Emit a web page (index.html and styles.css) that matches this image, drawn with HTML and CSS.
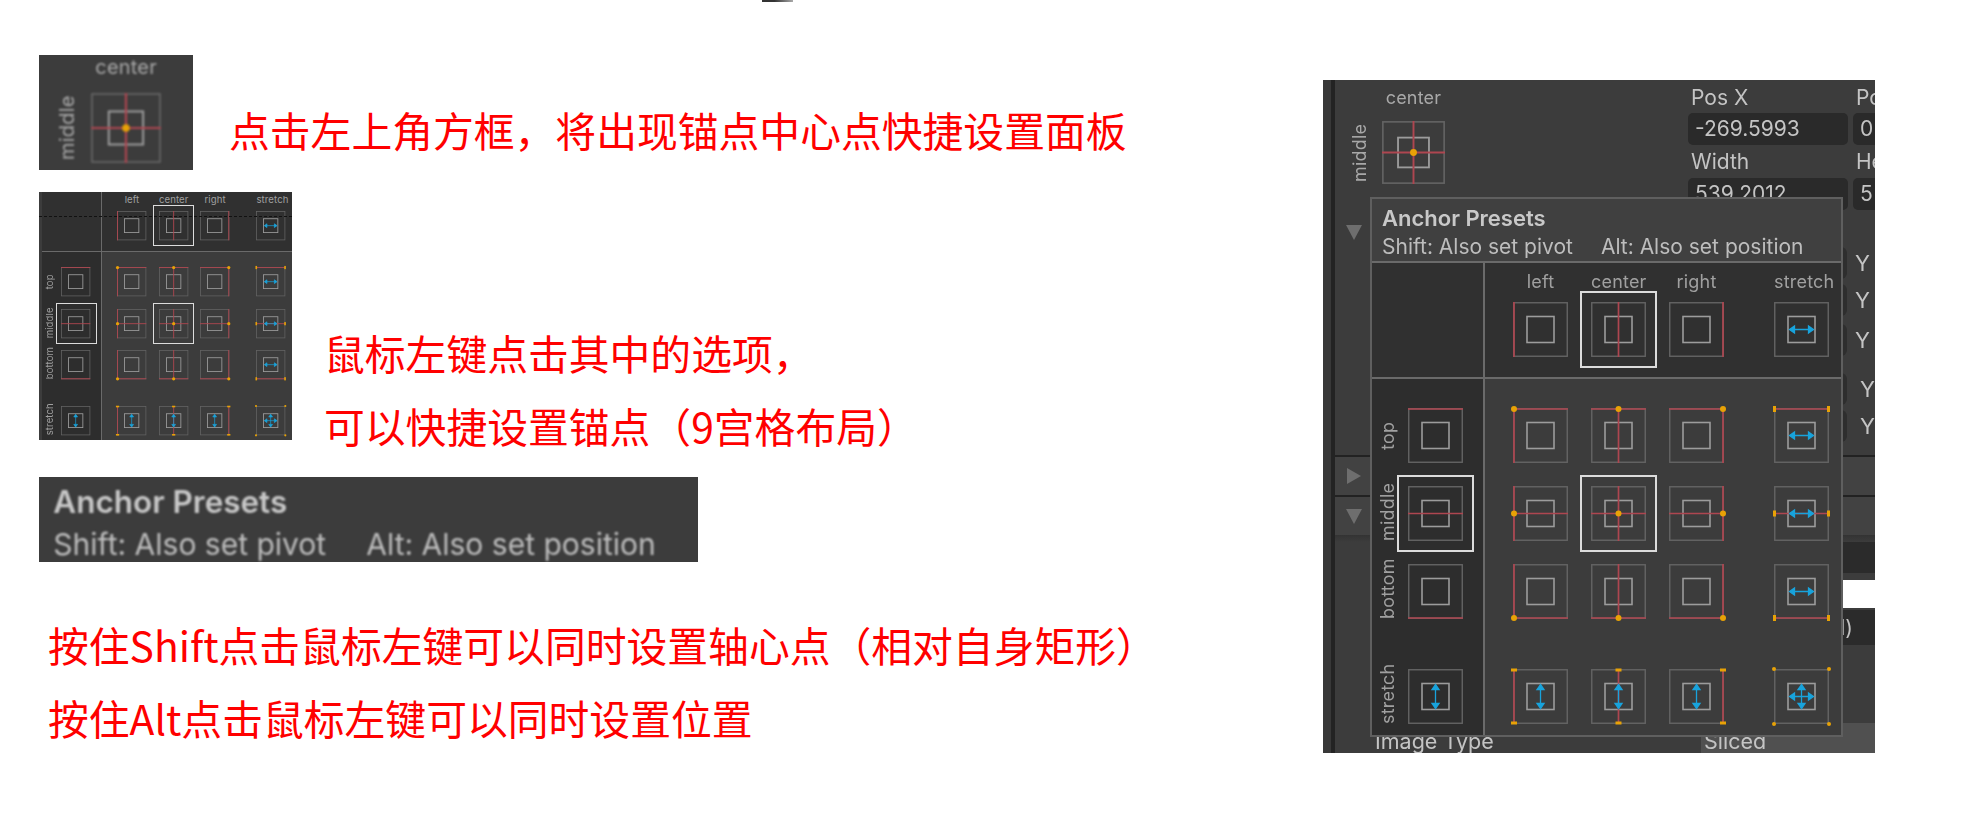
FILE: index.html
```html
<!DOCTYPE html>
<html lang="zh-CN">
<head>
    <meta charset="UTF-8">
    <meta name="viewport" content="width=device-width, initial-scale=1.0">
    <title>Anchor Presets</title>
    <link rel="stylesheet" href="styles.css">
</head>
<body>
    <!-- shared anchor icons, 55x55 -->
    <svg class="sprite" width="0" height="0" aria-hidden="true">
        <defs>
            <g id="box"><rect class="outer" x=".75" y=".75" width="53.5" height="53.5"/><rect class="inner" x="14" y="14.5" width="27" height="26"/></g>
            <path id="ah" class="arrow" d="M20 27.5H35M15.5 27.5l5-3.5v7zM39.5 27.5l-5-3.5v7z"/>
            <path id="av" class="arrow" d="M27.5 20V35M27.5 15.5l-3.500 5h7zM27.5 39.5l-3.500-5h7z"/>

            <g id="hl"><use href="#box"/><path class="red" d="M1 0V55"/></g>
            <g id="hc"><use href="#box"/><path class="red" d="M27.5 0V55"/></g>
            <g id="hr"><use href="#box"/><path class="red" d="M54 0V55"/></g>
            <g id="hs"><use href="#box"/><use href="#ah"/></g>
            <g id="vt"><use href="#box"/><path class="red" d="M0 1H55"/></g>
            <g id="vm"><use href="#box"/><path class="red" d="M0 27.5H55"/></g>
            <g id="vb"><use href="#box"/><path class="red" d="M0 54H55"/></g>
            <g id="vs"><use href="#box"/><use href="#av"/></g>

            <g id="lt"><use href="#box"/><path class="red" d="M1 0V55M0 1H55"/><circle class="dot" cx="1" cy="1" r="3"/></g>
            <g id="ct"><use href="#box"/><path class="red" d="M27.5 0V55M0 1H55"/><circle class="dot" cx="27.5" cy="1" r="3"/></g>
            <g id="rt"><use href="#box"/><path class="red" d="M54 0V55M0 1H55"/><circle class="dot" cx="54" cy="1" r="3"/></g>
            <g id="st"><use href="#box"/><path class="red" d="M0 1H55"/><rect class="dot" x="-1" y="-2" width="3" height="6"/><rect class="dot" x="53" y="-2" width="3" height="6"/><use href="#ah"/></g>

            <g id="lm"><use href="#box"/><path class="red" d="M1 0V55M0 27.5H55"/><circle class="dot" cx="1" cy="27.5" r="3"/></g>
            <g id="cm"><use href="#box"/><path class="red" d="M27.5 0V55M0 27.5H55"/><circle class="dot" cx="27.5" cy="27.5" r="3"/></g>
            <g id="rm"><use href="#box"/><path class="red" d="M54 0V55M0 27.5H55"/><circle class="dot" cx="54" cy="27.5" r="3"/></g>
            <g id="sm"><use href="#box"/><path class="red" d="M0 27.5H55"/><rect class="dot" x="-1" y="24.5" width="3" height="6"/><rect class="dot" x="53" y="24.5" width="3" height="6"/><use href="#ah"/></g>

            <g id="lb"><use href="#box"/><path class="red" d="M1 0V55M0 54H55"/><circle class="dot" cx="1" cy="54" r="3"/></g>
            <g id="cb"><use href="#box"/><path class="red" d="M27.5 0V55M0 54H55"/><circle class="dot" cx="27.5" cy="54" r="3"/></g>
            <g id="rb"><use href="#box"/><path class="red" d="M54 0V55M0 54H55"/><circle class="dot" cx="54" cy="54" r="3"/></g>
            <g id="sb"><use href="#box"/><path class="red" d="M0 54H55"/><rect class="dot" x="-1" y="51" width="3" height="6"/><rect class="dot" x="53" y="51" width="3" height="6"/><use href="#ah"/></g>

            <g id="ls"><use href="#box"/><path class="red" d="M1 0V55"/><rect class="dot" x="-2" y="-.5" width="6" height="3"/><rect class="dot" x="-2" y="52.5" width="6" height="3"/><use href="#av"/></g>
            <g id="cs"><use href="#box"/><path class="red" d="M27.5 0V55"/><rect class="dot" x="24.5" y="-.5" width="6" height="3"/><rect class="dot" x="24.5" y="52.5" width="6" height="3"/><use href="#av"/></g>
            <g id="rs"><use href="#box"/><path class="red" d="M54 0V55"/><rect class="dot" x="51" y="-.5" width="6" height="3"/><rect class="dot" x="51" y="52.5" width="6" height="3"/><use href="#av"/></g>
            <g id="ss"><use href="#box"/><circle class="dot" cx="0" cy="0" r="2"/><circle class="dot" cx="55" cy="0" r="2"/><circle class="dot" cx="0" cy="55" r="2"/><circle class="dot" cx="55" cy="55" r="2"/><use href="#ah"/><use href="#av"/></g>
        </defs>
    </svg>

    <main class="page">
        <section class="notes">
            <div class="top-tick"></div>

            <div class="note-row first">
                <div class="shot shot-anchor">
                    <div class="anchor-box">
                        <span class="anchor-h">center</span>
                        <span class="anchor-v">middle</span>
                        <svg class="pin big" viewBox="0 0 55 55"><use href="#cm"/></svg>
                    </div>
                </div>
                <p class="note">点击左上角方框，将出现锚点中心点快捷设置面板</p>
            </div>

            <div class="note-row second">
                <div class="shot shot-grid">
                    <div class="presets">
                        <div class="corner"></div>
                        <div class="col-head">
                            <span class="col-name">left</span><span class="col-name">center</span><span class="col-name">right</span><span class="col-name">stretch</span>
                            <svg class="pin" viewBox="0 0 55 55"><use href="#hl"/></svg>
                            <div class="selected"><svg class="pin" viewBox="0 0 55 55"><use href="#hc"/></svg></div>
                            <svg class="pin" viewBox="0 0 55 55"><use href="#hr"/></svg>
                            <svg class="pin" viewBox="0 0 55 55"><use href="#hs"/></svg>
                        </div>
                        <div class="row-head">
                            <span class="row-name">top</span><svg class="pin" viewBox="0 0 55 55"><use href="#vt"/></svg>
                            <span class="row-name">middle</span><div class="selected"><svg class="pin" viewBox="0 0 55 55"><use href="#vm"/></svg></div>
                            <span class="row-name">bottom</span><svg class="pin" viewBox="0 0 55 55"><use href="#vb"/></svg>
                            <span class="row-name">stretch</span><svg class="pin" viewBox="0 0 55 55"><use href="#vs"/></svg>
                        </div>
                        <div class="cells">
                            <svg class="pin" viewBox="0 0 55 55"><use href="#lt"/></svg>
                            <svg class="pin" viewBox="0 0 55 55"><use href="#ct"/></svg>
                            <svg class="pin" viewBox="0 0 55 55"><use href="#rt"/></svg>
                            <svg class="pin" viewBox="0 0 55 55"><use href="#st"/></svg>
                            <svg class="pin" viewBox="0 0 55 55"><use href="#lm"/></svg>
                            <div class="selected"><svg class="pin" viewBox="0 0 55 55"><use href="#cm"/></svg></div>
                            <svg class="pin" viewBox="0 0 55 55"><use href="#rm"/></svg>
                            <svg class="pin" viewBox="0 0 55 55"><use href="#sm"/></svg>
                            <svg class="pin" viewBox="0 0 55 55"><use href="#lb"/></svg>
                            <svg class="pin" viewBox="0 0 55 55"><use href="#cb"/></svg>
                            <svg class="pin" viewBox="0 0 55 55"><use href="#rb"/></svg>
                            <svg class="pin" viewBox="0 0 55 55"><use href="#sb"/></svg>
                            <svg class="pin" viewBox="0 0 55 55"><use href="#ls"/></svg>
                            <svg class="pin" viewBox="0 0 55 55"><use href="#cs"/></svg>
                            <svg class="pin" viewBox="0 0 55 55"><use href="#rs"/></svg>
                            <svg class="pin" viewBox="0 0 55 55"><use href="#ss"/></svg>
                        </div>
                    </div>
                    <div class="dash-line"></div>
                </div>
                <div class="note-lines">
                    <p class="note">鼠标左键点击其中的选项，</p>
                    <p class="note">可以快捷设置锚点（9宫格布局）</p>
                </div>
            </div>

            <div class="shot shot-head">
                <div class="popup-head">
                    <div class="popup-title">Anchor Presets</div>
                    <div class="popup-hint"><span>Shift: Also set pivot</span><span>Alt: Also set position</span></div>
                </div>
            </div>

            <div class="note-lines bottom">
                <p class="note">按住Shift点击鼠标左键可以同时设置轴心点（相对自身矩形）</p>
                <p class="note">按住Alt点击鼠标左键可以同时设置位置</p>
            </div>
        </section>

        <section class="inspector">
            <div class="gutter"></div>
            <div class="inspector-body">
                <div class="rect-top">
                    <div class="anchor-box">
                        <span class="anchor-h">center</span>
                        <span class="anchor-v">middle</span>
                        <svg class="pin big" viewBox="0 0 55 55"><use href="#cm"/></svg>
                    </div>
                    <div class="rect-fields">
                        <span class="field-name">Pos X</span><span class="field-name">Po</span>
                        <span class="field">-269.5993</span><span class="field">0</span>
                        <span class="field-name">Width</span><span class="field-name">He</span>
                        <span class="field">539.2012</span><span class="field">5</span>
                    </div>
                </div>

                <div class="vec-block">
                    <span class="fold down"></span>
                    <div class="vec-rows">
                        <div class="vec-row"><span class="stub"></span><span class="axis">Y</span></div>
                        <div class="vec-row"><span class="stub"></span><span class="axis">Y</span></div>
                        <div class="vec-row"><span class="stub"></span><span class="axis">Y</span></div>
                        <div class="vec-row shifted"><span class="stub"></span><span class="axis">Y</span></div>
                        <div class="vec-row shifted"><span class="stub"></span><span class="axis">Y</span></div>
                    </div>
                </div>

                <div class="section"><span class="fold right"></span></div>
                <div class="section"><span class="fold down"></span></div>

                <div class="material">
                    <div class="mat-bar"></div>
                    <div class="mat-white"></div>
                    <div class="mat-bar text">l)</div>
                </div>

                <div class="image-type">
                    <span class="type-name">Image Type</span>
                    <span class="type-value">Sliced</span>
                </div>
            </div>

            <div class="popup">
                <div class="popup-head">
                    <div class="popup-title">Anchor Presets</div>
                    <div class="popup-hint"><span>Shift: Also set pivot</span><span>Alt: Also set position</span></div>
                </div>
                <div class="presets">
                    <div class="corner"></div>
                    <div class="col-head">
                        <span class="col-name">left</span><span class="col-name">center</span><span class="col-name">right</span><span class="col-name">stretch</span>
                        <svg class="pin" viewBox="0 0 55 55"><use href="#hl"/></svg>
                        <div class="selected"><svg class="pin" viewBox="0 0 55 55"><use href="#hc"/></svg></div>
                        <svg class="pin" viewBox="0 0 55 55"><use href="#hr"/></svg>
                        <svg class="pin" viewBox="0 0 55 55"><use href="#hs"/></svg>
                    </div>
                    <div class="row-head">
                        <span class="row-name">top</span><svg class="pin" viewBox="0 0 55 55"><use href="#vt"/></svg>
                        <span class="row-name">middle</span><div class="selected"><svg class="pin" viewBox="0 0 55 55"><use href="#vm"/></svg></div>
                        <span class="row-name">bottom</span><svg class="pin" viewBox="0 0 55 55"><use href="#vb"/></svg>
                        <span class="row-name">stretch</span><svg class="pin" viewBox="0 0 55 55"><use href="#vs"/></svg>
                    </div>
                    <div class="cells">
                        <svg class="pin" viewBox="0 0 55 55"><use href="#lt"/></svg>
                        <svg class="pin" viewBox="0 0 55 55"><use href="#ct"/></svg>
                        <svg class="pin" viewBox="0 0 55 55"><use href="#rt"/></svg>
                        <svg class="pin" viewBox="0 0 55 55"><use href="#st"/></svg>
                        <svg class="pin" viewBox="0 0 55 55"><use href="#lm"/></svg>
                        <div class="selected"><svg class="pin" viewBox="0 0 55 55"><use href="#cm"/></svg></div>
                        <svg class="pin" viewBox="0 0 55 55"><use href="#rm"/></svg>
                        <svg class="pin" viewBox="0 0 55 55"><use href="#sm"/></svg>
                        <svg class="pin" viewBox="0 0 55 55"><use href="#lb"/></svg>
                        <svg class="pin" viewBox="0 0 55 55"><use href="#cb"/></svg>
                        <svg class="pin" viewBox="0 0 55 55"><use href="#rb"/></svg>
                        <svg class="pin" viewBox="0 0 55 55"><use href="#sb"/></svg>
                        <svg class="pin" viewBox="0 0 55 55"><use href="#ls"/></svg>
                        <svg class="pin" viewBox="0 0 55 55"><use href="#cs"/></svg>
                        <svg class="pin" viewBox="0 0 55 55"><use href="#rs"/></svg>
                        <svg class="pin" viewBox="0 0 55 55"><use href="#ss"/></svg>
                    </div>
                </div>
            </div>
        </section>
    </main>
</body>
</html>
```

FILE: styles.css
```css
body {
    margin: 0;
    height: 818px;
    overflow: hidden;
    background-color: #fff;
    font-family: Inter, "Liberation Sans", sans-serif;
}

.sprite {
    position: absolute;
}

.page {
    display: flex;
}

/* left column with the notes */
.notes {
    width: 1323px;
    flex: none;
    padding-left: 39px;
    box-sizing: border-box;
}

.top-tick {
    width: 31px;
    height: 2px;
    margin-left: 723px;
    background: linear-gradient(to right, #333, #333 40%, #aaa);
}

.note-row {
    display: flex;
}

.note-row.first {
    margin-top: 53px;
    height: 115px;
    gap: 36px;
}

.note-row.first .note {
    margin-top: 38px;
}

.note-row.second {
    margin-top: 22px;
    height: 248px;
    gap: 32px;
}

.note {
    margin: 0;
    color: #f00;
    font-family: "Noto Sans CJK SC", sans-serif;
    font-size: 40.8px;
    line-height: 73px;
    white-space: nowrap;
}

.note-row.second .note-lines {
    margin-top: 124px;
}

.note-lines.bottom {
    margin: 46px 0 0 9px;
}

.shot {
    flex: none;
    overflow: hidden;
    background-color: #3c3c3c;
}

.shot-anchor {
    width: 154px;
    height: 115px;
}

.shot-anchor .anchor-box {
    zoom: 1.11;
    margin: 2px 0 0 15px;
    filter: blur(.8px);
}

.shot-grid {
    position: relative;
    width: 253px;
    height: 248px;
}

.shot-grid .presets {
    zoom: .533;
    margin: -4px 0 0 6px;
    filter: blur(.6px);
}

.dash-line {
    position: absolute;
    left: 0;
    right: 0;
    top: 24px;
    border-top: 1px dashed #111;
}

.shot-head {
    width: 659px;
    height: 85px;
    margin-top: 37px;
}

.shot-head .popup-head {
    zoom: 1.43;
    margin-top: -1px;
    border: 0;
    background: none;
    filter: blur(.7px);
}

/* inspector screenshot */
.inspector {
    position: relative;
    display: flex;
    width: 552px;
    height: 673px;
    margin-top: 80px;
    overflow: hidden;
    background-color: #3c3c3c;
    color: #c4c4c4;
}

.inspector > * {
    filter: blur(.55px);
}

.gutter {
    width: 8px;
    flex: none;
    background-color: #383838;
    border-right: 4px solid #232323;
}

.inspector-body {
    flex: 1;
    min-width: 0;
    display: flex;
    flex-direction: column;
}

.rect-top {
    display: flex;
    flex: none;
    justify-content: space-between;
    height: 145px;
    padding-left: 15px;
    box-sizing: border-box;
}

.anchor-box {
    display: grid;
    grid-template-columns: 20px 63px;
    grid-template-rows: 18px 63px;
    column-gap: 12px;
    row-gap: 14px;
    margin-top: 9px;
    width: 95px;
    height: 95px;
    color: #a8a8a8;
    font-size: 18px;
    letter-spacing: .2px;
}

.anchor-h {
    grid-column: 2;
    line-height: 18px;
    text-align: center;
}

.anchor-v {
    grid-column: 1;
    writing-mode: vertical-rl;
    transform: rotate(180deg);
    line-height: 20px;
    text-align: center;
}

.pin {
    display: block;
    width: 55px;
    height: 55px;
    overflow: visible;
}

.pin.big {
    width: 63px;
    height: 63px;
}

.outer {
    fill: none;
    stroke: #646464;
    stroke-width: 1.4;
}

.inner {
    fill: none;
    stroke: #9c9c9c;
    stroke-width: 1.6;
}

.red {
    fill: none;
    stroke: #ae4650;
    stroke-width: 1.7;
}

.dot {
    fill: #e8a206;
}

.arrow {
    fill: #18a3dc;
    stroke: #18a3dc;
    stroke-width: 1.3;
}

.rect-fields {
    display: grid;
    grid-template-columns: 160px 160px;
    grid-template-rows: 32px 32px 33px 32px;
    column-gap: 5px;
    width: 187px;
    flex: none;
    padding-top: 1px;
    overflow: hidden;
    font-size: 21px;
    line-height: 32px;
}

.field-name {
    padding-left: 3px;
    line-height: 34px;
}

.field {
    padding-left: 7px;
    border-radius: 5px;
    background-color: #2a2a2a;
    white-space: nowrap;
}

.vec-block {
    display: flex;
    flex: none;
    justify-content: space-between;
    height: 230px;
}

.vec-rows {
    display: flex;
    flex-direction: column;
    margin-top: 22px;
}

.vec-row {
    display: flex;
    align-items: center;
    width: 40px;
    height: 32px;
    margin-bottom: 5px;
    font-size: 22px;
}

.vec-row:nth-child(3) {
    margin-top: 3px;
}

.vec-row:nth-child(4) {
    margin-top: 12px;
}

.stub {
    width: 12px;
    height: 32px;
    margin-right: 8px;
    border-radius: 0 6px 6px 0;
    background-color: #2e2e2e;
}

.vec-row.shifted .stub {
    margin-right: 13px;
}

.fold {
    display: block;
    width: 0;
    height: 0;
    flex: none;
}

.fold.down {
    margin-left: 11px;
    border-left: 8.5px solid transparent;
    border-right: 8.5px solid transparent;
    border-top: 15px solid #6e6e6e;
}

.fold.right {
    margin-left: 12px;
    border-top: 8.5px solid transparent;
    border-bottom: 8.5px solid transparent;
    border-left: 14px solid #6e6e6e;
}

.section {
    display: flex;
    flex: none;
    align-items: center;
    height: 38px;
    border-top: 2px solid #222;
    background-color: #424242;
}

.material {
    display: flex;
    flex: none;
    flex-direction: column;
    height: 188px;
    padding-top: 7px;
    align-items: flex-end;
    box-sizing: border-box;
    background: linear-gradient(to bottom, #333, #3c3c3c 7px);
}

.mat-bar {
    width: 174px;
    height: 31px;
    margin-bottom: 7px;
    background-color: #2b2b2b;
}

.mat-bar.text {
    height: 35px;
    margin: 2px 0 0;
    padding-right: 22px;
    box-sizing: border-box;
    font-size: 21px;
    line-height: 35px;
    text-align: right;
}

.mat-white {
    width: 174px;
    height: 28px;
    background-color: #fff;
}

.image-type {
    display: flex;
    flex: none;
    justify-content: space-between;
    height: 30px;
    padding-left: 40px;
    font-size: 21.5px;
    line-height: 30px;
}

.type-name {
    padding-top: 3px;
}

.type-value {
    width: 174px;
    padding: 3px 0 0 3px;
    box-sizing: border-box;
    background-color: #505050;
}

/* anchor presets popup */
.popup {
    position: absolute;
    left: 47px;
    top: 117px;
    width: 473px;
    height: 540px;
    box-sizing: border-box;
    border: 2px solid #5f5f5f;
    background-color: #3c3c3c;
}

.popup-head {
    height: 64px;
    padding: 6px 0 0 10px;
    box-sizing: border-box;
    border-bottom: 2px solid #6a6a6a;
    background-color: #404040;
    color: #bdbdbd;
}

.popup-title {
    font-size: 22px;
    font-weight: 600;
    line-height: 26px;
    color: #c8c8c8;
}

.popup-hint {
    display: flex;
    gap: 28px;
    margin-top: 3px;
    font-size: 21px;
    line-height: 26px;
    white-space: nowrap;
}

.presets {
    display: grid;
    grid-template-columns: 113px 356px;
    grid-template-rows: 116px 356px;
    width: 469px;
    color: #a0a0a0;
    font-size: 18px;
    letter-spacing: .2px;
}

.corner,
.col-head {
    background-color: #303030;
    border-bottom: 2px solid #6a6a6a;
}

.corner,
.row-head {
    border-right: 2px solid #6a6a6a;
}

.col-head {
    display: grid;
    grid-template-columns: 55px 55px 55px 82px;
    grid-template-rows: 18px 55px;
    column-gap: 23px;
    row-gap: 11px;
    padding: 10px 0 0 28px;
    box-sizing: border-box;
}

.col-name {
    line-height: 18px;
    text-align: center;
    white-space: nowrap;
}

.col-name:nth-child(4) {
    padding-left: 27px;
}

.col-head > svg:last-child,
.cells > svg:nth-child(4n) {
    justify-self: end;
}

.row-head {
    display: grid;
    grid-template-columns: 20px 55px;
    grid-template-rows: 55px 55px 55px 82px;
    column-gap: 10px;
    row-gap: 23px;
    padding: 29px 0 0 6px;
    box-sizing: border-box;
    background-color: #2d2d2d;
}

.row-head > svg:last-child {
    align-self: end;
}

.row-name {
    writing-mode: vertical-rl;
    transform: rotate(180deg);
    line-height: 20px;
    text-align: center;
    white-space: nowrap;
}

.row-name:nth-last-child(2) {
    align-self: end;
    height: 55px;
}

.cells {
    display: grid;
    grid-template-columns: 55px 55px 55px 82px;
    grid-template-rows: 55px 55px 55px 82px;
    column-gap: 23px;
    row-gap: 23px;
    padding: 29px 0 0 28px;
    box-sizing: border-box;
}

.cells > svg:nth-child(n+13) {
    align-self: end;
}

.selected {
    position: relative;
    width: 55px;
    height: 55px;
}

.selected::after {
    content: "";
    position: absolute;
    inset: -11px;
    border: 2px solid #dcdcdc;
}
```
